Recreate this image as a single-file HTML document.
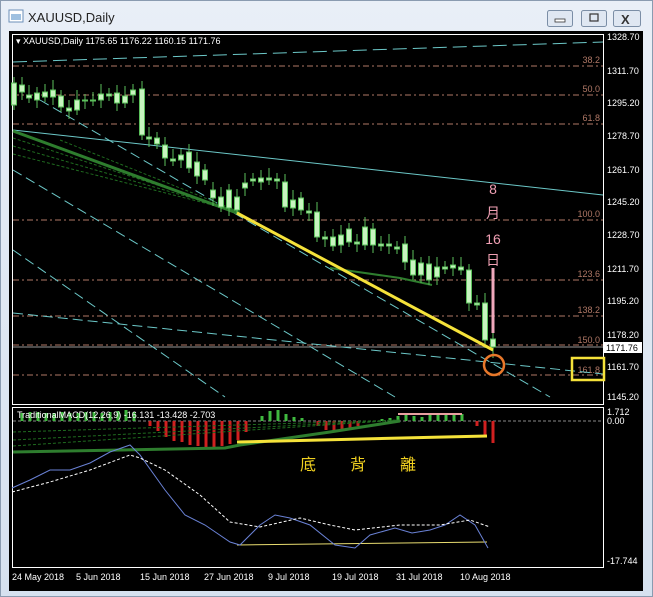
<!DOCTYPE html>
<html><head><meta charset="utf-8"><style>
html,body{margin:0;padding:0;width:653px;height:597px;overflow:hidden;background:#dce6f2;font-family:"Liberation Sans","Noto Sans CJK TC",sans-serif}
</style></head><body>
<svg width="653" height="597" xmlns="http://www.w3.org/2000/svg" style="position:absolute;left:0;top:0">
<defs><linearGradient id="tb" x1="0" y1="0" x2="0" y2="1"><stop offset="0" stop-color="#e9eff7"/><stop offset="1" stop-color="#d6e1ef"/></linearGradient></defs>
<rect x="0" y="0" width="653" height="597" fill="url(#tb)"/>
<rect x="0.5" y="0.5" width="652" height="596" fill="none" stroke="#8a9bb0"/>
<!-- title -->
<rect x="9" y="10" width="14" height="12" fill="#fff" stroke="#6b8fb8"/>
<rect x="11" y="14" width="10" height="6" fill="#9fc0e0"/>
<text x="28" y="22" font-size="13" fill="#222">XAUUSD,Daily</text>
<g fill="#dfe7f2" stroke="#7b8ea6"><rect x="547.5" y="10.5" width="25" height="16" rx="2"/><rect x="581.5" y="10.5" width="25" height="16" rx="2"/><rect x="613.5" y="10.5" width="27" height="16" rx="2"/></g>
<rect x="555" y="19" width="10" height="3" fill="#fff" stroke="#333" stroke-width="0.8"/>
<rect x="590" y="14" width="8" height="7" fill="none" stroke="#333" stroke-width="1.2"/>
<text x="621" y="24" font-size="13" fill="#333" font-weight="bold">X</text>
<!-- chart bg -->
<rect x="9" y="31" width="634" height="560" fill="#000"/>
<rect x="12.5" y="34.5" width="591" height="370" fill="none" stroke="#fff"/>
<rect x="12.5" y="407.5" width="591" height="160" fill="none" stroke="#fff"/>
<!-- fib lines -->
<g stroke="#b07866" stroke-width="1" stroke-dasharray="6,3,2,3">
<line x1="13" y1="66" x2="603" y2="66"/><line x1="13" y1="95" x2="603" y2="95"/><line x1="13" y1="124" x2="603" y2="124"/><line x1="13" y1="220" x2="603" y2="220"/><line x1="13" y1="280" x2="603" y2="280"/><line x1="13" y1="316" x2="603" y2="316"/><line x1="13" y1="345" x2="603" y2="345"/><line x1="13" y1="375" x2="603" y2="375"/>
</g>
<line x1="13" y1="347" x2="603" y2="347" stroke="#999" stroke-width="1"/>
<g fill="#b07866" font-size="9" text-anchor="end">
<text x="600" y="63">38.2</text><text x="600" y="92">50.0</text><text x="600" y="121">61.8</text><text x="600" y="217">100.0</text><text x="600" y="277">123.6</text><text x="600" y="313">138.2</text><text x="600" y="343">150.0</text><text x="600" y="373">161.8</text>
</g>
<!-- cyan lines -->
<g stroke="#6cc8c8" stroke-width="1" fill="none">
<line x1="13" y1="62" x2="603" y2="42" stroke-dasharray="14,6"/>
<line x1="13" y1="130" x2="603" y2="195"/>
<line x1="40" y1="100" x2="550" y2="397" stroke-dasharray="10,5"/>
<line x1="13" y1="170" x2="395" y2="397" stroke-dasharray="10,5"/>
<line x1="13" y1="250" x2="225" y2="397" stroke-dasharray="10,5"/>
<line x1="13" y1="313" x2="603" y2="374" stroke-dasharray="10,5"/>
</g>
<!-- green shaded -->
<g stroke="#1f6a1f" stroke-dasharray="3,2" stroke-width="1">
<line x1="13" y1="138" x2="240" y2="212"/><line x1="13" y1="146" x2="240" y2="212"/><line x1="13" y1="154" x2="240" y2="212"/><line x1="60" y1="140" x2="240" y2="212"/>
</g>
<line x1="13" y1="131" x2="237" y2="213" stroke="#2e7d2e" stroke-width="3"/>
<polyline points="330,268 400,278 432,285" stroke="#2e7d2e" stroke-width="2" fill="none"/>
<!-- candles -->
<g id="c" stroke="#5cc05c" fill="#c8f4c0" stroke-width="1"></g>
<!-- yellow trend -->
<line x1="237" y1="213" x2="493" y2="350" stroke="#f5e23a" stroke-width="3"/>
<line x1="493" y1="268" x2="493" y2="333" stroke="#f0a8bc" stroke-width="3"/>
<circle cx="494" cy="365" r="10" fill="none" stroke="#e8782a" stroke-width="2.5"/>
<rect x="572" y="358" width="32" height="22" fill="none" stroke="#f5e23a" stroke-width="2.5"/>
<g fill="#f0a0b4" font-size="14" text-anchor="middle">
<text x="493" y="194">8</text><text x="493" y="218">月</text><text x="493" y="244">16</text><text x="493" y="265">日</text>
</g>
<text x="16" y="44" font-size="9" fill="#fff">▾ XAUUSD,Daily  1175.65 1176.22 1160.15 1171.76</text>
<!-- price axis -->
<g fill="#fff" font-size="9">
<text x="607" y="40">1328.70</text><text x="607" y="74">1311.70</text><text x="607" y="106">1295.20</text><text x="607" y="139">1278.70</text><text x="607" y="173">1261.70</text><text x="607" y="205">1245.20</text><text x="607" y="238">1228.70</text><text x="607" y="272">1211.70</text><text x="607" y="304">1195.20</text><text x="607" y="338">1178.20</text><text x="607" y="370">1161.70</text><text x="607" y="400">1145.20</text>
<text x="607" y="415">1.712</text><text x="607" y="424">0.00</text><text x="607" y="564">-17.744</text>
</g>
<rect x="604" y="342" width="38" height="11" fill="#fff"/>
<text x="606" y="351" font-size="9" fill="#000">1171.76</text>
<!-- MACD -->
<line x1="13" y1="421" x2="603" y2="421" stroke="#888" stroke-dasharray="3,2"/>
<g id="h"></g>
<g stroke="#1f6a1f" stroke-dasharray="3,2" stroke-width="1">
<line x1="13" y1="432" x2="400" y2="420"/><line x1="13" y1="440" x2="400" y2="420"/><line x1="13" y1="446" x2="400" y2="420"/>
</g>
<polyline points="13,452 225,448 240,445 330,432 400,421" stroke="#2e7d2e" stroke-width="3" fill="none"/>
<line x1="237" y1="442" x2="487" y2="436" stroke="#f5e23a" stroke-width="3"/>
<line x1="237" y1="545" x2="487" y2="542" stroke="#e8dc70" stroke-width="1"/>
<polyline points="12,488 30,480 50,470 70,470 90,463 110,452 130,445 140,455 165,490 185,515 205,525 230,542 240,545 260,525 275,515 290,518 310,525 335,545 355,548 370,535 395,528 412,533 430,530 445,525 460,515 475,525 488,548" fill="none" stroke="#6a82d6" stroke-width="1"/>
<polyline points="12,492 50,482 90,470 130,455 140,458 165,470 200,495 230,522 260,527 300,518 330,525 355,530 400,525 440,525 470,520 490,527" fill="none" stroke="#fff" stroke-width="1" stroke-dasharray="3,2"/>
<text x="17" y="418" font-size="9" fill="#fff">TraditionalMACD(12,26,9) -16.131 -13.428 -2.703</text>
<g fill="#f0d020" font-size="16" font-family="'Noto Sans CJK TC',sans-serif"><text x="300" y="470">底</text><text x="350" y="470">背</text><text x="400" y="470">離</text></g>
<!-- dates -->
<g fill="#fff" font-size="9">
<text x="12" y="580">24 May 2018</text><text x="76" y="580">5 Jun 2018</text><text x="140" y="580">15 Jun 2018</text><text x="204" y="580">27 Jun 2018</text><text x="268" y="580">9 Jul 2018</text><text x="332" y="580">19 Jul 2018</text><text x="396" y="580">31 Jul 2018</text><text x="460" y="580">10 Aug 2018</text>
</g>
</svg>
<script>
var C=[[14,83,105],[22,85,92],[29,95,98],[37,93,100],[45,92,97],[53,90,97],[61,96,107],[69,108,111],[77,100,110],[85,100,101],[93,100,101],[101,94,100],[109,94,96],[117,93,103],[125,96,103],[133,90,95],[142,89,135],[149,137,139],[157,138,144],[165,145,158],[173,159,161],[181,155,160],[189,152,168],[197,162,176],[205,170,180],[213,190,198],[221,197,207],[229,190,208],[237,197,210],[245,183,188],[253,179,181],[261,178,182],[269,178,180],[277,179,181],[285,182,207],[293,200,208],[301,198,210],[309,211,213],[317,212,237],[325,237,239],[333,237,246],[341,235,245],[349,229,242],[357,242,244],[365,227,245],[373,229,245],[381,244,246],[389,244,246],[397,247,249],[405,244,262],[413,260,275],[421,263,275],[429,264,280],[437,267,277],[445,267,269],[453,265,268],[461,267,270],[469,270,303],[477,303,305],[485,303,340],[493,339,347]];
var ns="http://www.w3.org/2000/svg",g=document.getElementById('c');
C.forEach(function(c,i){var l=document.createElementNS(ns,'line');l.setAttribute('x1',c[0]);l.setAttribute('x2',c[0]);l.setAttribute('y1',c[1]-6-(i%3)*2);l.setAttribute('y2',c[0]==493?358:c[2]+5+(i%2)*3);g.appendChild(l);
var r=document.createElementNS(ns,'rect');r.setAttribute('x',c[0]-2.5);r.setAttribute('y',c[1]);r.setAttribute('width',5);r.setAttribute('height',Math.max(1,c[2]-c[1]));g.appendChild(r);});
var h=document.getElementById('h');
function bar(x,y0,y1,col){var r=document.createElementNS(ns,'rect');r.setAttribute('x',x-1.5);r.setAttribute('y',Math.min(y0,y1));r.setAttribute('width',3);r.setAttribute('height',Math.abs(y1-y0));r.setAttribute('fill',col);h.appendChild(r);}
var gr=[[22,413],[30,412],[38,412],[46,413],[54,413],[62,412],[70,413],[78,413],[86,412],[94,412],[102,413],[110,412],[118,411],[126,410],[134,412]];
gr.forEach(function(b){bar(b[0],421,b[1],'#3fb93f');});
var rd=[[150,426],[158,431],[166,437],[174,441],[182,442],[190,445],[198,446],[206,448],[214,448],[222,446],[230,444],[238,440],[246,432]];
rd.forEach(function(b){bar(b[0],421,b[1],'#d02020');});
[[262,416],[270,411],[278,410],[286,414],[294,417],[302,418]].forEach(function(b){bar(b[0],421,b[1],'#3fb93f');});
[[318,426],[326,430],[334,432],[342,430],[350,428],[358,426]].forEach(function(b){bar(b[0],421,b[1],'#c02020');});
[[382,419],[390,418],[398,416],[406,415],[414,416],[422,417],[430,415],[438,414],[446,414],[454,414],[462,414]].forEach(function(b){bar(b[0],421,b[1],'#3fb93f');});
var pk=document.createElementNS(ns,'line');pk.setAttribute('x1',398);pk.setAttribute('x2',462);pk.setAttribute('y1',414);pk.setAttribute('y2',414);pk.setAttribute('stroke','#e8a0a0');pk.setAttribute('stroke-width',2);h.appendChild(pk);
[[477,426],[485,435],[493,443]].forEach(function(b){bar(b[0],421,b[1],'#d02020');});
</script>
</body></html>
